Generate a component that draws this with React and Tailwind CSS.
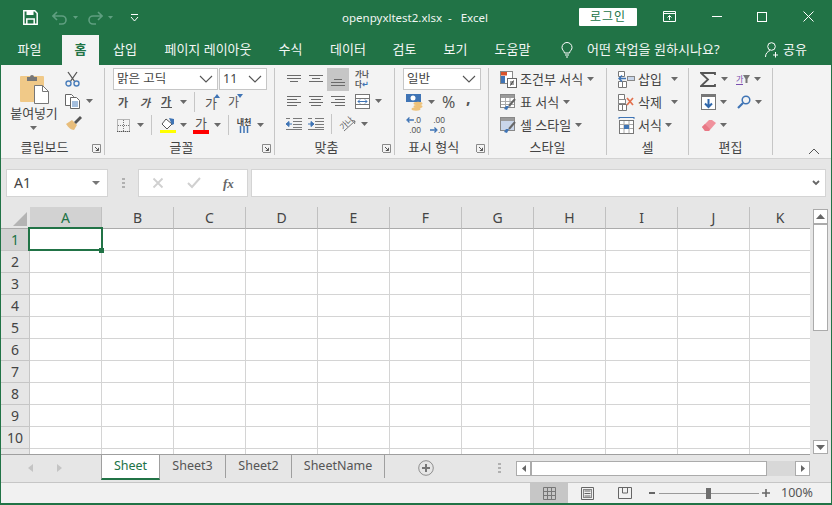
import React from "react";

const Caret = ({ className = "" }) => (
  <svg width="7" height="4" viewBox="0 0 7 4" className={`shrink-0 ${className}`}>
    <path d="M0 0h7L3.5 4z" fill="#6a6a6a" />
  </svg>
);

const Sep = ({ className = "" }) => <div className={`w-px h-[20px] shrink-0 bg-[#c6c6c6] ${className}`} />;

const Row = ({ className = "", children }) => (
  <div className={`flex items-center h-[22px] shrink-0 ${className}`}>{children}</div>
);

const Chevron = ({ w = 14, h = 8 }) => (
  <svg width={w} height={h} viewBox="0 0 14 8" className="shrink-0">
    <path d="M1 1l6 6 6-6" fill="none" stroke="#555" strokeWidth="1.1" />
  </svg>
);

const Combo = ({ text, className = "", textClass = "" }) => (
  <div className={`h-[22px] flex items-center justify-between bg-white border border-[#c6c6c6] pl-[3px] pr-[4px] ${className}`}>
    <span className={textClass}>{text}</span>
    <Chevron />
  </div>
);

const Launcher = () => (
  <svg width="9" height="9" viewBox="0 0 9 9" className="absolute right-[3px] bottom-[2px]">
    <path d="M.5 8V.5H8.5V8.5H1" fill="none" stroke="#8a8a8a" />
    <path d="M3 3l3.5 3.5M6.5 3.8v2.7H3.8" fill="none" stroke="#555" />
  </svg>
);

const Group = ({ w, label, launcher, children }) => (
  <div className={`${w} relative flex flex-col shrink-0 h-[87px] my-[3px] border-r border-[#c6c6c6]`}>
    <div className="h-[70px] flex flex-col">{children}</div>
    <div className={`flex-1 flex items-center justify-center text-[13px] leading-none text-[#444] pt-[1px] ${launcher ? "pr-[16px]" : ""}`}>{label}</div>
    {launcher && <Launcher />}
  </div>
);

const Lines = ({ rows, w = 14, h = 12, color = "#6a6a6a" }) => (
  <svg width={w} height={h} viewBox={`0 0 ${w} ${h}`} className="shrink-0">
    {rows.map(([x1, x2, y], i) => (
      <path key={i} d={`M${x1} ${y + 0.5}H${x2}`} stroke={color} />
    ))}
  </svg>
);

const Paste = () => (
  <svg width="30" height="31" viewBox="0 0 30 31">
    <rect x="0" y="3" width="24" height="26" rx="1" fill="#f0c988" />
    <path d="M7 4h3a2 2 0 0 1 4 0h3v4H7z" fill="#777" />
    <path d="M14.5 12.5h8l6 6v12h-14z" fill="#fff" stroke="#777" />
    <path d="M22.5 12.5v6h6" fill="none" stroke="#777" />
  </svg>
);

const Scissors = () => (
  <svg width="15" height="16" viewBox="0 0 15 16">
    <path d="M3 1l7 10M12 1L5 11" stroke="#555" strokeWidth="1.3" fill="none" />
    <circle cx="3.5" cy="12.5" r="2.5" fill="none" stroke="#4a7ebb" strokeWidth="1.4" />
    <circle cx="11.5" cy="12.5" r="2.5" fill="none" stroke="#4a7ebb" strokeWidth="1.4" />
  </svg>
);

const Copy = () => (
  <svg width="16" height="15" viewBox="0 0 16 15">
    <path d="M.5.5h6l2 2v9H.5z" fill="#fff" stroke="#666" />
    <path d="M5.5 3.5h6l3 3v8h-9z" fill="#fff" stroke="#666" />
    <path d="M7 8h6M7 10h6M7 12h6" stroke="#4a7ebb" />
  </svg>
);

const Brush = () => (
  <svg width="17" height="15" viewBox="0 0 17 15">
    <path d="M1 8l6-4 5 5-3 5c-3 0-6-3-8-6z" fill="#e8bd7a" />
    <path d="M9 6l6-6 2 2-6 6z" fill="#555" />
  </svg>
);

const Borders = () => (
  <svg width="13" height="13" viewBox="0 0 13 13">
    <rect x=".5" y=".5" width="12" height="12" fill="none" stroke="#777" strokeDasharray="1 1" />
    <path d="M6.500 1v11M1 6.500h11" stroke="#777" strokeDasharray="1 1" />
    <path d="M0 12.500h13" stroke="#555" strokeDasharray="1 1" />
  </svg>
);

const FillColor = () => (
  <svg width="16" height="16" viewBox="0 0 16 16">
    <path d="M6 2l6 5-5 5-5-5z" fill="#fff" stroke="#555" />
    <path d="M9 1l5 1v5l-2 1z" fill="#3f74b5" />
    <rect x="0" y="13" width="16" height="3" fill="#ffff00" />
  </svg>
);

const AlignTable = () => (
  <svg width="15" height="15" viewBox="0 0 15 15">
    <rect x=".5" y=".5" width="14" height="14" fill="#fff" stroke="#777" />
    <path d="M1 4.500h13M1 10.500h13" stroke="#777" />
    <path d="M3 7.500h9" stroke="#3f74b5" />
    <path d="M5 5.500l-2 2 2 2M10 5.500l2 2-2 2" fill="none" stroke="#3f74b5" />
  </svg>
);

const Indent = ({ flip }) => (
  <svg width="16" height="12" viewBox="0 0 16 12">
    <path d="M7 .5h9M7 3.500h9M7 6.500h9M7 9.500h9M0 11.500h16M0 .5h4" stroke="#7a7a7a" />
    {flip ? (
      <path d="M0 6h5M3 3.500L6 6 3 8.500z" fill="#3f74b5" stroke="#3f74b5" />
    ) : (
      <path d="M6 6H1M3 3.500L0 6l3 2.500z" fill="#3f74b5" stroke="#3f74b5" />
    )}
  </svg>
);

const Orientation = () => (
  <div className="relative w-[18px] h-[16px] shrink-0">
    <span className="absolute left-[1px] top-[0px] text-[8px] leading-[14px] text-[#555] -rotate-45">가나</span>
    <svg width="18" height="16" viewBox="0 0 18 16" className="absolute inset-0">
      <path d="M6 15L17 5M14 4.500l3 .5-.5 3" fill="none" stroke="#777" />
    </svg>
  </div>
);

const Money = () => (
  <svg width="17" height="17" viewBox="0 0 17 17">
    <rect x="0" y="0" width="15" height="8" fill="#3f74b5" />
    <circle cx="7" cy="4" r="2.500" fill="#fff" />
    <ellipse cx="12" cy="9.500" rx="4.500" ry="1.700" fill="#eec27a" />
    <ellipse cx="12" cy="12.500" rx="4.500" ry="1.700" fill="#eec27a" />
    <ellipse cx="10" cy="15" rx="4.500" ry="1.700" fill="#eec27a" />
  </svg>
);

const Decimal = ({ top, bottom, arrowTop }) => (
  <div className="flex flex-col w-[15px] text-[8.500px] leading-[10px] font-['Liberation_Sans',sans-serif] text-[#555] shrink-0">
    <div className="flex items-center justify-end w-full h-[10px]">
      {arrowTop && (
        <svg width="8" height="6" viewBox="0 0 8 6" className="mr-auto">
          <path d="M8 3H2M3.500.5L1 3l2.500 2.500" fill="none" stroke="#3f74b5" strokeWidth="1.300" />
        </svg>
      )}
      <span>{top}</span>
    </div>
    <div className="flex items-center justify-end w-full h-[10px]">
      {!arrowTop && (
        <svg width="8" height="6" viewBox="0 0 8 6" className="mr-auto">
          <path d="M0 3h6M4.500.5L7 3 4.500 5.500" fill="none" stroke="#3f74b5" strokeWidth="1.300" />
        </svg>
      )}
      <span>{bottom}</span>
    </div>
  </div>
);

const CondFormat = () => (
  <svg width="17" height="17" viewBox="0 0 17 17">
    <rect x=".5" y=".5" width="12" height="12" fill="#fff" stroke="#888" />
    <rect x="1" y="1" width="6" height="3.500" fill="#d9532c" />
    <rect x="1" y="5" width="4" height="7" fill="#3f74b5" />
    <rect x="7.500" y="7.500" width="9" height="9" fill="#fff" stroke="#666" />
    <path d="M10 11h4M10 13h4M13.500 9.500l-3 5" stroke="#444" fill="none" />
  </svg>
);

const TableFormat = ({ plain }) => (
  <svg width="17" height="17" viewBox="0 0 17 17">
    <rect x=".5" y=".5" width="14" height="13" fill={plain ? "#c9d6ea" : "#fff"} stroke="#888" />
    <rect x="1" y="1" width="13" height="3" fill="#9a9a9a" />
    {!plain && <path d="M5.500 4v9M10 4v9M1 7.500h13M1 10.500h13" stroke="#aaa" />}
    <path d="M15 5L9 12" stroke="#666" strokeWidth="2" />
    <path d="M6 12l3 0-2 4-3-1z" fill="#3f74b5" />
  </svg>
);

const CellInsert = () => (
  <svg width="17" height="17" viewBox="0 0 17 17">
    <path d="M.5.5h6v5h-6zM.5 10.500h4v6h-4zM4.500 10.500h4v6h-4z" fill="#fff" stroke="#777" />
    <rect x="9.500" y="5.500" width="7" height="4" fill="#c9d6ea" stroke="#888" />
    <path d="M8 7.500H1M4 4.500L1 7.500l3 3" fill="none" stroke="#3f74b5" strokeWidth="1.500" />
  </svg>
);

const CellDelete = () => (
  <svg width="17" height="17" viewBox="0 0 17 17">
    <path d="M.5.5h6v5h-6zM.5 10.500h4v6h-4zM4.500 10.500h4v6h-4z" fill="#fff" stroke="#777" />
    <rect x=".5" y="5.500" width="7" height="4" fill="#fff" stroke="#888" />
    <path d="M9 4l6 7M15 4l-6 7" stroke="#e2704d" strokeWidth="1.700" />
  </svg>
);

const CellFormat = () => (
  <svg width="17" height="17" viewBox="0 0 17 17">
    <path d="M1 .5h15M1 0v2M16 0v2" stroke="#3f74b5" />
    <rect x="1.500" y="3.500" width="14" height="13" fill="#fff" stroke="#777" />
    <path d="M6 4v12M11 4v12M2 7.500h13M2 11.500h13" stroke="#aaa" />
    <rect x="6" y="8" width="5" height="4" fill="#3f74b5" />
  </svg>
);

const Sigma = () => (
  <svg width="16" height="15" viewBox="0 0 16 15">
    <path d="M15 3V1H1l7 6.500L1 14h14v-2" fill="none" stroke="#555" strokeWidth="1.800" />
  </svg>
);

const FillDown = () => (
  <svg width="15" height="16" viewBox="0 0 15 16">
    <rect x=".5" y=".5" width="14" height="15" fill="#fff" stroke="#777" />
    <rect x="1" y="1" width="13" height="2" fill="#777" />
    <path d="M7.500 5v8M4 9.500l3.500 3.500L11 9.500" fill="none" stroke="#2f67aa" strokeWidth="2" />
  </svg>
);

const Eraser = () => (
  <svg width="15" height="13" viewBox="0 0 15 13">
    <path d="M1 8l7-7h3l4 3-7 8H4z" fill="#f0919c" />
    <path d="M1 8l3-3 5 5-1 2H4z" fill="#e87885" />
  </svg>
);

const Search = () => (
  <svg width="14" height="14" viewBox="0 0 14 14">
    <circle cx="9" cy="5" r="3.800" fill="none" stroke="#3f74b5" strokeWidth="1.500" />
    <path d="M6 8l-5 5" stroke="#3f74b5" strokeWidth="2.200" />
  </svg>
);

const SortFilter = () => (
  <div className="flex items-center shrink-0 w-[15px]">
    <span className="text-[8px] leading-[10px] text-[#7a4fb0] border-b border-[#7a4fb0]">가</span>
    <svg width="7" height="8" viewBox="0 0 7 8"><path d="M0 0h7L4.500 4v4h-2V4z" fill="#777" /></svg>
  </div>
);

const Grow = ({ up }) => (
  <div className={`relative w-[13px] h-[16px] shrink-0 leading-[18px] text-[#555] font-normal ${up ? "text-[13px]" : "text-[12px]"}`}>
    가
    <svg width="6" height="4" viewBox="0 0 6 4" className="absolute right-[-2px] top-0">
      <path d={up ? "M0 4h6L3 0z" : "M0 0h6L3 4z"} fill="#3f74b5" />
    </svg>
  </div>
);

const columns = ["A", "B", "C", "D", "E", "F", "G", "H", "I", "J"];
const rows = [1, 2, 3, 4, 5, 6, 7, 8, 9, 10];

const tabs = [
  { t: "파일", c: "w-[57px]" },
  { t: "홈", c: "w-[37px] ml-[4px] bg-[#f3f3f3] text-[#217346] font-semibold" },
  { t: "삽입", c: "w-[52px]" },
  { t: "페이지 레이아웃", c: "w-[114px]" },
  { t: "수식", c: "w-[51px]" },
  { t: "데이터", c: "w-[64px]" },
  { t: "검토", c: "w-[49px]" },
  { t: "보기", c: "w-[53px]" },
  { t: "도움말", c: "w-[61px]" },
];

export default function App() {
  return (
    <div className="w-[832px] h-[505px] overflow-hidden flex flex-col bg-[#f3f3f3] border-x border-b-2 border-[#217346] font-['Noto_Sans','Noto_Sans_CJK_KR',sans-serif] text-[#444]">
      {/* title bar */}
      <div className="h-[35px] shrink-0 flex items-center bg-[#217346] text-white">
        <div className="w-[250px] flex items-center pl-[22px]">
          <svg width="15" height="15" viewBox="0 0 15 15">
            <path d="M.8.8h11l2.400 2.400v11H.8z" fill="none" stroke="#fff" strokeWidth="1.500" />
            <rect x="3.500" y="1" width="7" height="4" fill="#fff" />
            <path d="M3.800 14V9h7.400v5" fill="none" stroke="#fff" strokeWidth="1.500" />
          </svg>
          <svg width="16" height="14" viewBox="0 0 16 14" className="ml-[14px]">
            <path d="M5 1L1 5l4 4M1 5h9a3.800 3.800 0 0 1 0 8H7" fill="none" stroke="#5f9f80" strokeWidth="1.600" />
          </svg>
          <svg width="5" height="3" viewBox="0 0 5 3" className="ml-[5px]"><path d="M0 0h5L2.500 3z" fill="#5f9f80" /></svg>
          <svg width="16" height="14" viewBox="0 0 16 14" className="ml-[9px]">
            <path d="M11 1l4 4-4 4M15 5H6a3.800 3.800 0 0 0 0 8h3" fill="none" stroke="#5f9f80" strokeWidth="1.600" />
          </svg>
          <svg width="5" height="3" viewBox="0 0 5 3" className="ml-[5px]"><path d="M0 0h5L2.500 3z" fill="#5f9f80" /></svg>
          <svg width="9" height="8" viewBox="0 0 9 8" className="ml-[17px]">
            <path d="M1 .5h7" stroke="#fff" />
            <path d="M1 3l3.500 4L8 3" fill="none" stroke="#fff" />
          </svg>
        </div>
        <div className="w-[328px] text-center text-[11.500px] leading-none whitespace-pre text-[#f0f5f2]">openpyxltest2.xlsx  -   Excel</div>
        <div className="w-[58px] h-[18px] mb-[2px] bg-white rounded-[1px] flex items-center justify-center text-[12px] leading-none text-[#217346] tracking-[1px]">로그인</div>
        <div className="w-[65px] flex justify-center mb-[2px]">
          <svg width="13" height="11" viewBox="0 0 13 11">
            <path d="M.5.5h12v10H.5zM.5 2.500h12" fill="none" stroke="#fff" />
            <path d="M6.500 9V4.500M4.500 6.500l2-2 2 2" fill="none" stroke="#fff" />
          </svg>
        </div>
        <div className="w-[29px] flex justify-center mb-[2px]"><div className="w-[10px] h-px bg-white" /></div>
        <div className="w-[62px] flex justify-center mb-[2px]"><div className="w-[10px] h-[10px] border border-white" /></div>
        <div className="w-[30px] flex justify-center mb-[2px]">
          <svg width="11" height="11" viewBox="0 0 11 11"><path d="M.5.5l10 10M10.500.5l-10 10" stroke="#fff" /></svg>
        </div>
      </div>

      {/* ribbon tabs */}
      <div className="h-[30px] shrink-0 flex items-stretch bg-[#217346] text-[#f3f7f5] text-[13px] leading-none">
        {tabs.map((tab) => (
          <div key={tab.t} className={`flex items-center justify-center shrink-0 pb-[1px] ${tab.c}`}>{tab.t}</div>
        ))}
        <div className="flex items-center ml-[18px] mb-[1px]">
          <svg width="12" height="16" viewBox="0 0 12 16">
            <path d="M3.500 11C3 8.500 1 8 1 5.500a5 5 0 0 1 10 0C11 8 9 8.500 8.500 11zM4 13h4M5 15h2" fill="none" stroke="#fff" />
          </svg>
          <span className="ml-[14px] w-[150px] tracking-[0.05px]">어떤 작업을 원하시나요?</span>
          <svg width="14" height="16" viewBox="0 0 14 16" className="ml-[28px]">
            <circle cx="6.500" cy="4.500" r="3.800" fill="none" stroke="#fff" />
            <path d="M.5 15c0-3.500 2-5.500 4.500-6.500M10.500 10v5.500M8 13h5" fill="none" stroke="#fff" />
          </svg>
          <span className="ml-[4px]">공유</span>
        </div>
      </div>

      {/* ribbon */}
      <div className="h-[94px] shrink-0 flex bg-[#f3f3f3] border-b border-[#d2d2d2]">
        <Group w="w-[104px]" label="클립보드" launcher>
          <div className="flex">
            <div className="w-[64px] flex flex-col items-center shrink-0">
              <div className="mt-[5px] ml-[3px]"><Paste /></div>
              <div className="text-[13px] leading-none mt-[3px] ml-[2px] tracking-[-0.1px] text-[#444] whitespace-nowrap">붙여넣기</div>
              <Caret className="mt-[6px]" />
            </div>
            <div className="flex flex-col">
              <Row><Scissors /></Row>
              <Row><Copy /><Caret className="ml-[5px]" /></Row>
              <Row className="h-[23px]"><Brush /></Row>
            </div>
          </div>
        </Group>

        <Group w="w-[170px]" label="글꼴" launcher>
          <Row className="pl-[8px]">
            <Combo text="맑은 고딕" className="w-[105px]" textClass="text-[12.500px] leading-none" />
            <Combo text="11" className="w-[48px] ml-[1px]" textClass="text-[12.500px] leading-none" />
          </Row>
          <Row className="pl-[13px] mt-[1px] text-[11px] leading-none font-semibold text-[#555]">
            <span className="w-[9px]">가</span>
            <span className="w-[9px] ml-[13px] italic">가</span>
            <span className="w-[11px] ml-[12px] border-b border-[#555]">가</span>
            <Caret className="ml-[8px]" />
            <Sep className="ml-[7px]" />
            <div className="ml-[10px]"><Grow up /></div>
            <div className="ml-[10px]"><Grow /></div>
          </Row>
          <Row className="pl-[12px] h-[24px]">
            <Borders />
            <Caret className="ml-[7px]" />
            <Sep className="ml-[7px]" />
            <div className="ml-[8px] flex"><FillColor /></div>
            <Caret className="ml-[4px]" />
            <div className="ml-[6px] w-[16px] flex flex-col items-center text-[13px] leading-[13px] text-[#555]">
              가
              <div className="w-[16px] h-[4px] bg-[#ff0000]" />
            </div>
            <Caret className="ml-[5px]" />
            <Sep className="ml-[7px]" />
            <div className="ml-[7px] w-[16px] flex flex-col items-center text-[8px] leading-[8px] font-semibold">
              내천
              <svg width="10" height="7" viewBox="0 0 10 7"><path d="M1.500 0v7M5 0v7M8.500 0v7" stroke="#3f74b5" strokeWidth="1.500" /></svg>
            </div>
            <Caret className="ml-[5px]" />
          </Row>
        </Group>

        <Group w="w-[120px]" label="맞춤" launcher>
          <Row className="pl-[12px]">
            <Lines rows={[[0, 14, 0], [0, 14, 3], [3, 11, 6]]} h={8} />
            <div className="ml-[8px]"><Lines rows={[[0, 14, 0], [3, 11, 3], [0, 14, 6]]} h={8} /></div>
            <div className="ml-[4px] w-[22px] h-[23px] bg-[#c6c6c6] flex items-end justify-center pb-[4px]">
              <Lines rows={[[3, 11, 0], [0, 14, 3], [0, 14, 6]]} h={8} />
            </div>
            <div className="ml-[6px] w-[17px] text-[7.500px] leading-[10px] font-semibold text-[#555]">
              <div>가나</div>
              <div className="flex items-center">다<span className="text-[#3f74b5]">↵</span></div>
            </div>
          </Row>
          <Row className="pl-[12px]">
            <Lines rows={[[0, 14, 0], [0, 10, 3], [0, 14, 6], [0, 10, 9]]} h={10} />
            <div className="ml-[8px]"><Lines rows={[[0, 14, 0], [2, 12, 3], [0, 14, 6], [2, 12, 9]]} h={10} /></div>
            <div className="ml-[8px]"><Lines rows={[[0, 14, 0], [4, 14, 3], [0, 14, 6], [4, 14, 9]]} h={10} /></div>
            <div className="ml-[10px] flex"><AlignTable /></div>
            <Caret className="ml-[5px]" />
          </Row>
          <Row className="pl-[11px] h-[24px]">
            <Indent />
            <div className="ml-[6px] flex"><Indent flip /></div>
            <Sep className="ml-[7px]" />
            <div className="ml-[6px]"><Orientation /></div>
            <Caret className="ml-[5px]" />
          </Row>
        </Group>

        <Group w="w-[94px]" label="표시 형식" launcher>
          <Row className="pl-[8px]">
            <Combo text="일반" className="w-[78px]" textClass="text-[12.500px] leading-none" />
          </Row>
          <Row className="pl-[11px] mt-[1px]">
            <Money />
            <Caret className="ml-[5px]" />
            <span className="ml-[7px] w-[14px] text-[16px] leading-none text-[#555]">%</span>
            <span className="ml-[10px] text-[16px] leading-none font-bold text-[#555] mb-[9px]">,</span>
          </Row>
          <Row className="pl-[11px] h-[24px]">
            <Decimal top=".0" bottom=".00" arrowTop />
            <div className="ml-[9px]"><Decimal top=".00" bottom=".0" /></div>
          </Row>
        </Group>

        <Group w="w-[118px]" label="스타일">
          <Row className="pl-[11px] text-[13px] leading-none whitespace-nowrap">
            <CondFormat /><span className="ml-[3px]">조건부 서식</span><Caret className="ml-[4px]" />
          </Row>
          <Row className="pl-[11px] mt-[1px] text-[13px] leading-none whitespace-nowrap">
            <TableFormat /><span className="ml-[3px]">표 서식</span><Caret className="ml-[4px]" />
          </Row>
          <Row className="pl-[11px] h-[24px] text-[13px] leading-none whitespace-nowrap">
            <TableFormat plain /><span className="ml-[3px]">셀 스타일</span><Caret className="ml-[4px]" />
          </Row>
        </Group>

        <Group w="w-[82px]" label="셀">
          <Row className="pl-[11px] text-[13px] leading-none whitespace-nowrap">
            <CellInsert /><span className="ml-[3px] w-[24px]">삽입</span><Caret className="ml-[9px]" />
          </Row>
          <Row className="pl-[11px] mt-[1px] text-[13px] leading-none whitespace-nowrap">
            <CellDelete /><span className="ml-[3px] w-[24px]">삭제</span><Caret className="ml-[9px]" />
          </Row>
          <Row className="pl-[11px] h-[24px] text-[13px] leading-none whitespace-nowrap">
            <CellFormat /><span className="ml-[3px] w-[24px]">서식</span><Caret className="ml-[3px]" />
          </Row>
        </Group>

        <Group w="w-[84px]" label="편집">
          <Row className="pl-[11px]">
            <Sigma /><Caret className="ml-[5px]" />
            <div className="ml-[8px] flex"><SortFilter /></div>
            <Caret className="ml-[3px]" />
          </Row>
          <Row className="pl-[12px] mt-[1px]">
            <FillDown /><Caret className="ml-[4px]" />
            <div className="ml-[10px] flex"><Search /></div>
            <Caret className="ml-[4px]" />
          </Row>
          <Row className="pl-[12px] h-[24px]">
            <Eraser /><Caret className="ml-[4px]" />
          </Row>
        </Group>

        <div className="flex-1 flex items-end justify-end pr-[11px] pb-[3px]">
          <svg width="12" height="7" viewBox="0 0 12 7"><path d="M1 6l5-5 5 5" fill="none" stroke="#555" /></svg>
        </div>
      </div>

      {/* formula bar */}
      <div className="h-[48px] shrink-0 flex items-start pt-[10px] pl-[5px] bg-[#e6e6e6]">
        <div className="w-[102px] h-[28px] bg-white border border-[#d4d4d4] flex items-center justify-between pl-[7px] pr-[7px]">
          <span className="text-[14px] leading-none text-[#444]">A1</span>
          <svg width="8" height="4" viewBox="0 0 8 4"><path d="M0 0h8L4 4z" fill="#777" /></svg>
        </div>
        <div className="w-[30px] h-[28px] flex items-center justify-center">
          <svg width="3" height="10" viewBox="0 0 3 10"><path d="M0 0h3v2H0zM0 4h3v2H0zM0 8h3v2H0z" fill="#b0b0b0" /></svg>
        </div>
        <div className="w-[110px] h-[28px] bg-white border border-[#d4d4d4] flex items-center">
          <svg width="12" height="12" viewBox="0 0 12 12" className="ml-[13px]"><path d="M1.500 1.500l9 9M10.500 1.500l-9 9" stroke="#d0d0d0" strokeWidth="1.800" /></svg>
          <svg width="14" height="12" viewBox="0 0 14 12" className="ml-[23px]"><path d="M1 6l4 4 8-9" fill="none" stroke="#d0d0d0" strokeWidth="2" /></svg>
          <span className="ml-[22px] text-[13px] leading-none italic font-bold font-['Liberation_Serif',serif] text-[#666]">fx</span>
        </div>
        <div className="w-[575px] h-[28px] ml-[3px] bg-white border border-[#d4d4d4] flex items-center justify-end pr-[5px]">
          <svg width="8" height="6" viewBox="0 0 8 6"><path d="M1 1l3 3 3-3" fill="none" stroke="#666" strokeWidth="1.800" /></svg>
        </div>
      </div>

      {/* sheet grid + vertical scroll */}
      <div className="h-[248px] shrink-0 flex bg-[#e6e6e6]">
        <div className="w-[809px] shrink-0 flex flex-col overflow-hidden">
          <div className="flex h-[22px] shrink-0 text-[14px] leading-none text-[#444]">
            <div className="w-[29px] shrink-0 bg-[#e6e6e6] border-b border-[#ababab] flex items-start justify-end pt-[5px] pr-[3px]">
              <svg width="14" height="14" viewBox="0 0 14 14"><path d="M14 0v14H0z" fill="#b4b4b4" /></svg>
            </div>
            {columns.map((c, i) => (
              <div key={c} className={`w-[72px] shrink-0 flex items-center justify-center border-b border-r border-r-[#c0c0c0] ${i === 0 ? "bg-[#d2d2d2] text-[#217346] border-b-[#ababab]" : "border-b-[#ababab]"}`}>{c}</div>
            ))}
            <div className="w-[60px] shrink-0 flex items-center justify-center border-b border-[#ababab]">K</div>
          </div>
          {rows.map((r) => (
            <div key={r} className="flex h-[22px] shrink-0">
              <div className={`w-[29px] shrink-0 flex items-center justify-center border-r border-b border-[#c6c6c6] text-[14px] leading-none ${r === 1 ? "bg-[#d2d2d2] text-[#217346]" : "text-[#444]"}`}>{r}</div>
              {columns.map((c) => (
                <div key={c} className="relative w-[72px] shrink-0 bg-white border-r border-b border-[#d4d4d4]">
                  {r === 1 && c === "A" && (
                    <>
                      <div className="absolute left-[-2px] top-[-2px] w-[75px] h-[24px] border-2 border-[#217346] z-10" />
                      <div className="absolute left-[69px] top-[19px] w-[5px] h-[5px] bg-[#217346] z-10" />
                    </>
                  )}
                </div>
              ))}
              <div className="w-[60px] shrink-0 bg-white border-b border-[#d4d4d4]" />
            </div>
          ))}
          <div className="flex h-[5px] shrink-0">
            <div className="w-[29px] shrink-0 border-r border-[#c6c6c6]" />
            {columns.map((c) => (
              <div key={c} className="w-[72px] shrink-0 bg-white border-r border-[#d4d4d4]" />
            ))}
            <div className="w-[60px] shrink-0 bg-white" />
          </div>
          <div className="h-px shrink-0 bg-[#9f9f9f]" />
        </div>
        <div className="w-[21px] shrink-0 flex flex-col pl-[3px] pt-[2px] h-[248px]">
          <div className="w-[15px] h-[15px] shrink-0 bg-white border border-[#ababab] flex items-center justify-center">
            <svg width="9" height="5" viewBox="0 0 9 5"><path d="M0 5h9L4.500 0z" fill="#666" /></svg>
          </div>
          <div className="w-[15px] h-[107px] shrink-0 bg-white border border-[#ababab]" />
          <div className="flex-1" />
          <div className="w-[15px] h-[14px] mb-[1px] shrink-0 bg-white border border-[#ababab] flex items-center justify-center">
            <svg width="9" height="5" viewBox="0 0 9 5"><path d="M0 0h9L4.500 5z" fill="#666" /></svg>
          </div>
        </div>
      </div>

      {/* sheet tabs */}
      <div className="h-[28px] shrink-0 flex items-stretch bg-[#e6e6e6] border-b border-[#c6c6c6]">
        <div className="w-[100px] shrink-0 flex items-center pl-[27px] pb-[1px]">
          <svg width="5" height="8" viewBox="0 0 5 8"><path d="M5 0v8L0 4z" fill="#c4c4c4" /></svg>
          <svg width="5" height="8" viewBox="0 0 5 8" className="ml-[24px]"><path d="M0 0v8l5-4z" fill="#c4c4c4" /></svg>
        </div>
        <div className="w-[59px] h-[25px] shrink-0 bg-white border-x border-x-[#9f9f9f] border-b-2 border-b-[#217346] flex items-center justify-center text-[12.500px] leading-none text-[#217346]">Sheet</div>
        {[["Sheet3", "w-[66px]"], ["Sheet2", "w-[66px]"], ["SheetName", "w-[93px]"]].map(([n, w]) => (
          <div key={n} className={`${w} h-[23px] shrink-0 flex items-center justify-center border-r border-[#9f9f9f] text-[12.500px] leading-none text-[#555]`}>{n}</div>
        ))}
        <div className="w-[33px] shrink-0" />
        <div className="flex items-center pb-[1px]">
          <svg width="16" height="16" viewBox="0 0 16 16">
            <circle cx="8" cy="8" r="7.300" fill="none" stroke="#8e8e8e" />
            <path d="M8 4v8M4 8h8" stroke="#777" strokeWidth="2" />
          </svg>
          <svg width="3" height="10" viewBox="0 0 3 10" className="ml-[64px]"><path d="M0 0h3v2H0zM0 4h3v2H0zM0 8h3v2H0z" fill="#b0b0b0" /></svg>
          <div className="ml-[15px] w-[15px] h-[15px] bg-white border border-[#ababab] flex items-center justify-center">
            <svg width="4" height="7" viewBox="0 0 4 7"><path d="M4 0v7L0 3.500z" fill="#666" /></svg>
          </div>
          <div className="w-[236px] h-[15px] bg-white border border-[#ababab]" />
          <div className="w-[28px] h-[15px] bg-[#d8d8d8]" />
          <div className="w-[15px] h-[15px] bg-white border border-[#ababab] flex items-center justify-center">
            <svg width="4" height="7" viewBox="0 0 4 7"><path d="M0 0v7l4-3.500z" fill="#666" /></svg>
          </div>
        </div>
      </div>

      {/* status bar */}
      <div className="flex-1 flex items-stretch bg-[#f1f1f1]">
        <div className="w-[529px] shrink-0" />
        <div className="w-[38px] shrink-0 bg-[#c6c6c6] flex items-center justify-center">
          <svg width="13" height="13" viewBox="0 0 13 13"><path d="M.5.5h12v12H.5zM4.500 1v11M8.500 1v11M1 4.500h11M1 8.500h11" fill="none" stroke="#777" /></svg>
        </div>
        <div className="w-[38px] shrink-0 flex items-center justify-center">
          <svg width="13" height="13" viewBox="0 0 13 13"><path d="M.5.5h12v12H.5zM3.500 4h6M3.500 6.500h6M3.500 9h6" fill="none" stroke="#666" /><rect x="2.500" y="2.500" width="8" height="8" fill="none" stroke="#888" /></svg>
        </div>
        <div className="w-[38px] shrink-0 flex items-center justify-center">
          <svg width="14" height="12" viewBox="0 0 14 12"><path d="M.5.500h13v11H.5zM4.500 1v5h5V1" fill="none" stroke="#666" /></svg>
        </div>
        <div className="flex items-center pl-[5px] text-[#666]">
          <div className="w-[6px] h-[2px] bg-[#666]" />
          <div className="relative w-[100px] h-px ml-[4px] bg-[#9a9a9a]">
            <div className="absolute left-[47px] top-[-5px] w-[5px] h-[11px] bg-[#6e6e6e]" />
          </div>
          <svg width="8" height="8" viewBox="0 0 8 8" className="ml-[3px]"><path d="M4 0v8M0 4h8" stroke="#666" strokeWidth="1.600" /></svg>
          <span className="ml-[11px] text-[12.500px] leading-none text-[#555]">100%</span>
        </div>
      </div>
    </div>
  );
}
